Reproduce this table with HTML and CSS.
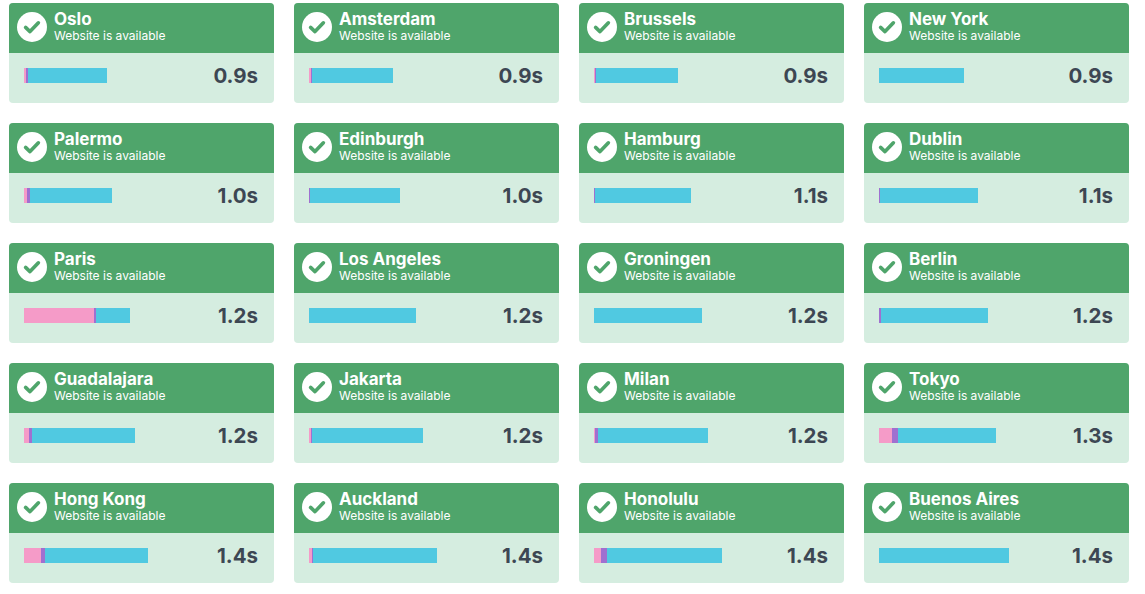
FILE: index.html
```html
<!DOCTYPE html>
<html lang="en">
<head>
<meta charset="utf-8">
<title>Uptime</title>
<link rel="stylesheet" href="styles.css">
</head>
<body>
<svg width="0" height="0" class="defs">
  <symbol id="ok" viewBox="0 0 30 30">
    <circle cx="15" cy="15" r="15" fill="#fff"/>
    <path d="M8.6 15.4 L13 19.6 L21.4 10.8" fill="none" stroke="#4fa56b" stroke-width="3.6" stroke-linecap="round" stroke-linejoin="round"/>
  </symbol>
</svg>
<div class="grid">
  <div class="card"><div class="head"><svg class="icon"><use href="#ok"/></svg><div class="txt"><div class="city">Oslo</div><div class="sub">Website is available</div></div></div><div class="body"><div class="bar" style="width:83px"><span class="pink" style="width:2px"></span><span class="purple" style="width:2px"></span><span class="cyan"></span></div><div class="time">0.9s</div></div></div>
  <div class="card"><div class="head"><svg class="icon"><use href="#ok"/></svg><div class="txt"><div class="city">Amsterdam</div><div class="sub">Website is available</div></div></div><div class="body"><div class="bar" style="width:84px"><span class="pink" style="width:2px"></span><span class="purple" style="width:1px"></span><span class="cyan"></span></div><div class="time">0.9s</div></div></div>
  <div class="card"><div class="head"><svg class="icon"><use href="#ok"/></svg><div class="txt"><div class="city">Brussels</div><div class="sub">Website is available</div></div></div><div class="body"><div class="bar" style="width:84px"><span class="pink" style="width:1px"></span><span class="purple" style="width:1px"></span><span class="cyan"></span></div><div class="time">0.9s</div></div></div>
  <div class="card"><div class="head"><svg class="icon"><use href="#ok"/></svg><div class="txt"><div class="city">New York</div><div class="sub">Website is available</div></div></div><div class="body"><div class="bar" style="width:85px"><span class="cyan"></span></div><div class="time">0.9s</div></div></div>

  <div class="card"><div class="head"><svg class="icon"><use href="#ok"/></svg><div class="txt"><div class="city">Palermo</div><div class="sub">Website is available</div></div></div><div class="body"><div class="bar" style="width:88px"><span class="pink" style="width:3px"></span><span class="purple" style="width:3px"></span><span class="cyan"></span></div><div class="time">1.0s</div></div></div>
  <div class="card"><div class="head"><svg class="icon"><use href="#ok"/></svg><div class="txt"><div class="city">Edinburgh</div><div class="sub">Website is available</div></div></div><div class="body"><div class="bar" style="width:91px"><span class="purple" style="width:1px"></span><span class="cyan"></span></div><div class="time">1.0s</div></div></div>
  <div class="card"><div class="head"><svg class="icon"><use href="#ok"/></svg><div class="txt"><div class="city">Hamburg</div><div class="sub">Website is available</div></div></div><div class="body"><div class="bar" style="width:97px"><span class="purple" style="width:1px"></span><span class="cyan"></span></div><div class="time">1.1s</div></div></div>
  <div class="card"><div class="head"><svg class="icon"><use href="#ok"/></svg><div class="txt"><div class="city">Dublin</div><div class="sub">Website is available</div></div></div><div class="body"><div class="bar" style="width:99px"><span class="purple" style="width:1px"></span><span class="cyan"></span></div><div class="time">1.1s</div></div></div>

  <div class="card"><div class="head"><svg class="icon"><use href="#ok"/></svg><div class="txt"><div class="city">Paris</div><div class="sub">Website is available</div></div></div><div class="body"><div class="bar" style="width:106px"><span class="pink" style="width:70px"></span><span class="purple" style="width:2px"></span><span class="cyan"></span></div><div class="time">1.2s</div></div></div>
  <div class="card"><div class="head"><svg class="icon"><use href="#ok"/></svg><div class="txt"><div class="city">Los Angeles</div><div class="sub">Website is available</div></div></div><div class="body"><div class="bar" style="width:107px"><span class="cyan"></span></div><div class="time">1.2s</div></div></div>
  <div class="card"><div class="head"><svg class="icon"><use href="#ok"/></svg><div class="txt"><div class="city">Groningen</div><div class="sub">Website is available</div></div></div><div class="body"><div class="bar" style="width:108px"><span class="cyan"></span></div><div class="time">1.2s</div></div></div>
  <div class="card"><div class="head"><svg class="icon"><use href="#ok"/></svg><div class="txt"><div class="city">Berlin</div><div class="sub">Website is available</div></div></div><div class="body"><div class="bar" style="width:109px"><span class="purple" style="width:2px"></span><span class="cyan"></span></div><div class="time">1.2s</div></div></div>

  <div class="card"><div class="head"><svg class="icon"><use href="#ok"/></svg><div class="txt"><div class="city">Guadalajara</div><div class="sub">Website is available</div></div></div><div class="body"><div class="bar" style="width:111px"><span class="pink" style="width:5px"></span><span class="purple" style="width:3px"></span><span class="cyan"></span></div><div class="time">1.2s</div></div></div>
  <div class="card"><div class="head"><svg class="icon"><use href="#ok"/></svg><div class="txt"><div class="city">Jakarta</div><div class="sub">Website is available</div></div></div><div class="body"><div class="bar" style="width:114px"><span class="pink" style="width:2px"></span><span class="purple" style="width:1px"></span><span class="cyan"></span></div><div class="time">1.2s</div></div></div>
  <div class="card"><div class="head"><svg class="icon"><use href="#ok"/></svg><div class="txt"><div class="city">Milan</div><div class="sub">Website is available</div></div></div><div class="body"><div class="bar" style="width:114px"><span class="pink" style="width:1px"></span><span class="purple" style="width:3px"></span><span class="cyan"></span></div><div class="time">1.2s</div></div></div>
  <div class="card"><div class="head"><svg class="icon"><use href="#ok"/></svg><div class="txt"><div class="city">Tokyo</div><div class="sub">Website is available</div></div></div><div class="body"><div class="bar" style="width:117px"><span class="pink" style="width:13px"></span><span class="purple" style="width:6px"></span><span class="cyan"></span></div><div class="time">1.3s</div></div></div>

  <div class="card"><div class="head"><svg class="icon"><use href="#ok"/></svg><div class="txt"><div class="city">Hong Kong</div><div class="sub">Website is available</div></div></div><div class="body"><div class="bar" style="width:124px"><span class="pink" style="width:17px"></span><span class="purple" style="width:4px"></span><span class="cyan"></span></div><div class="time">1.4s</div></div></div>
  <div class="card"><div class="head"><svg class="icon"><use href="#ok"/></svg><div class="txt"><div class="city">Auckland</div><div class="sub">Website is available</div></div></div><div class="body"><div class="bar" style="width:128px"><span class="pink" style="width:3px"></span><span class="purple" style="width:1px"></span><span class="cyan"></span></div><div class="time">1.4s</div></div></div>
  <div class="card"><div class="head"><svg class="icon"><use href="#ok"/></svg><div class="txt"><div class="city">Honolulu</div><div class="sub">Website is available</div></div></div><div class="body"><div class="bar" style="width:128px"><span class="pink" style="width:7px"></span><span class="purple" style="width:6px"></span><span class="cyan"></span></div><div class="time">1.4s</div></div></div>
  <div class="card"><div class="head"><svg class="icon"><use href="#ok"/></svg><div class="txt"><div class="city">Buenos Aires</div><div class="sub">Website is available</div></div></div><div class="body"><div class="bar" style="width:130px"><span class="cyan"></span></div><div class="time">1.4s</div></div></div>
</div>
</body>
</html>
```

FILE: styles.css
```css
html, body {
  margin: 0;
  background: #ffffff;
}
body {
  padding: 3px 0 0 9px;
  font-family: Inter, "Noto Sans", "Liberation Sans", sans-serif;
}
.defs {
  position: absolute;
  width: 0;
  height: 0;
}
.grid {
  display: grid;
  grid-template-columns: repeat(4, 265px);
  column-gap: 20px;
  row-gap: 20px;
}
.card {
  height: 100px;
  border-radius: 4px;
  overflow: hidden;
  background: #d5ede0;
  display: flex;
  flex-direction: column;
}
.head {
  height: 50px;
  background: #4fa56b;
  display: flex;
  align-items: flex-start;
  padding: 8px 0 0 8px;
  box-sizing: border-box;
  color: #ffffff;
}
.icon {
  width: 30px;
  height: 30px;
  flex: none;
  margin-top: 1px;
}
.txt {
  margin-left: 7px;
  display: flex;
  flex-direction: column;
}
.city {
  font-size: 17px;
  font-weight: 700;
  line-height: 17px;
}
.sub {
  font-size: 12px;
  line-height: 14px;
  font-weight: 400;
  margin-top: 1px;
}
.body {
  flex: 1;
  display: flex;
  align-items: flex-start;
  justify-content: space-between;
  padding: 15px 16px 0 15px;
}
.bar {
  height: 15px;
  display: flex;
}
.bar span {
  display: block;
  height: 100%;
}
.pink { background: #f59bc8; }
.purple { background: #9f70d0; }
.cyan { background: #50c9e1; flex: 1; }
.time {
  font-size: 20.5px;
  font-weight: 700;
  line-height: 16px;
  color: #3d4753;
}
```
